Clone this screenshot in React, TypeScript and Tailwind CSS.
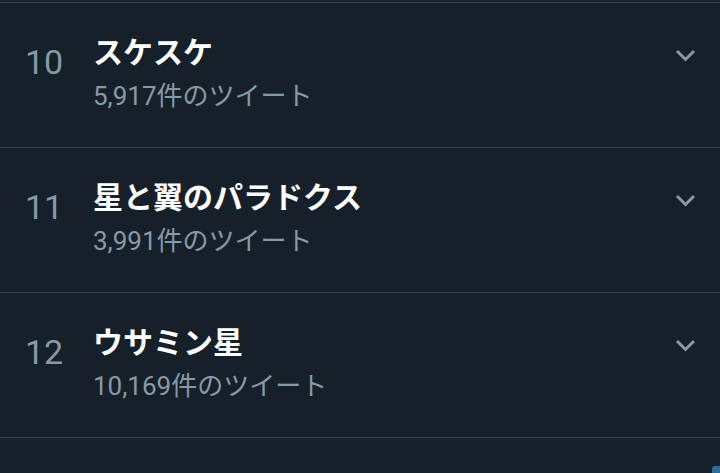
import React from 'react'

const trends = [
  { rank: 10, title: 'スケスケ', count: '5,917件のツイート' },
  { rank: 11, title: '星と翼のパラドクス', count: '3,991件のツイート' },
  { rank: 12, title: 'ウサミン星', count: '10,169件のツイート' },
]

const Chevron = () => (
  <svg width="21" height="14" viewBox="0 0 21 14" className="block">
    <polyline points="2,2 10.5,10.5 19,2" fill="none" stroke="#8899a6" strokeWidth="3" />
  </svg>
)

const TrendRow = ({ rank, title, count }: { rank: number; title: string; count: string }) => (
  <div className="flex h-[145px] border-b border-[#38444d]">
    <div className="w-[93px] shrink-0 pl-[25px] pt-[42px] text-[34px] leading-[34px] text-[#8899a6]">{rank}</div>
    <div className="flex-1 pt-[32px]">
      <div className="text-[30px] font-bold leading-[36px] text-white">{title}</div>
      <div className="mt-[7px] text-[26px] leading-[36px] text-[#8899a6]">{count}</div>
    </div>
    <div className="pr-[24px] pt-[46px]">
      <Chevron />
    </div>
  </div>
)

export default function App() {
  return (
    <div
      className="relative h-[473px] w-[720px] overflow-hidden bg-[#16202a] pt-[2px]"
      style={{ fontFamily: "Roboto, 'Noto Sans CJK JP', sans-serif" }}
    >
      <div className="border-t border-[#38444d]">
        {trends.map((t) => (
          <TrendRow key={t.rank} {...t} />
        ))}
      </div>
      <div className="absolute bottom-0 right-0 h-[7px] w-[8px] rounded-tl-[3px] bg-[#2b6c99]" />
    </div>
  )
}
